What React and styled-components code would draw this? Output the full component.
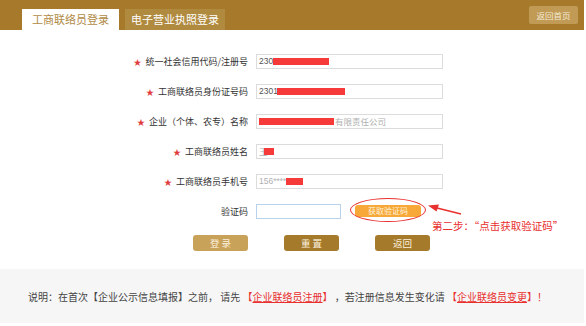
import React from 'react';
import styled, { createGlobalStyle } from 'styled-components';

const GlobalStyle = createGlobalStyle`
  html, body {
    margin: 0;
    padding: 0;
    background: #fff;
  }
  body {
    font-family: "Noto Sans CJK SC", "Noto Sans", sans-serif;
  }
`;

const fields = [
  { label: '统一社会信用代码/注册号', value: '230', dark: true, mask: [16, 56] },
  { label: '工商联络员身份证号码', value: '2301', dark: true, mask: [20, 68] },
  { label: '企业（个体、农专）名称', value: '', mask: [2, 75], suffix: '有限责任公司' },
  { label: '工商联络员姓名', value: '王', mask: [7, 10] },
  { label: '工商联络员手机号', value: '156*****', mask: [29, 17] },
];

const App = () => {
  return (
    <Page>
      <GlobalStyle />
      <Header>
        <Tabs>
          <Tab active>工商联络员登录</Tab>
          <Tab>电子营业执照登录</Tab>
        </Tabs>
        <HomeButton>返回首页</HomeButton>
      </Header>

      <Form>
        {fields.map((f) => (
          <Row key={f.label}>
            <Label>
              <Star>★</Star>
              {f.label}
            </Label>
            <Input>
              <InputText dark={f.dark}>{f.value}</InputText>
              <Mask style={{ left: f.mask[0], width: f.mask[1] }} />
              {f.suffix && (
                <InputText style={{ marginLeft: f.mask[1] + 1 }}>{f.suffix}</InputText>
              )}
            </Input>
          </Row>
        ))}
        <Row>
          <Label>验证码</Label>
          <CodeArea>
            <CodeInput />
            <CodeButtonWrap>
              <CodeButton>获取验证码</CodeButton>
              <Ellipse />
            </CodeButtonWrap>
            <Note>
              <svg width="34" height="12" viewBox="0 0 34 12">
                <path d="M33 10 L9 4" stroke="#e8302f" strokeWidth="1.6" fill="none" />
                <path d="M0 1.5 L11 0.5 L8.5 7.5 Z" fill="#e8302f" />
              </svg>
              <NoteText>第二步：“点击获取验证码”</NoteText>
            </Note>
          </CodeArea>
        </Row>
      </Form>

      <Actions>
        <ActionButton light>登 录</ActionButton>
        <ActionButton>重 置</ActionButton>
        <ActionButton>返回</ActionButton>
      </Actions>

      <Footer>
        说明：在首次【企业公示信息填报】之前， 请先 <Red>【<u>企业联络员注册</u>】</Red> ，若注册信息发生变化请 <Red>【<u>企业联络员变更</u>】！</Red>
      </Footer>
    </Page>
  );
};

export default App;

const Page = styled.div`
  width: 584px;
  height: 326px;
  background: #fff;
`;

const Header = styled.div`
  height: 30px;
  background: #a67a2a;
  display: flex;
  justify-content: space-between;
  align-items: flex-start;
  padding: 0 6px 0 22px;
`;

const Tabs = styled.div`
  display: flex;
  gap: 6px;
  padding-top: 9px;
`;

const Tab = styled.div`
  height: 21px;
  line-height: 21px;
  width: ${(p) => (p.active ? '97px' : '100px')};
  box-sizing: border-box;
  font-size: 11px;
  text-align: center;
  background: ${(p) => (p.active ? '#fff' : '#b08a3e')};
  color: ${(p) => (p.active ? '#b08a45' : '#fff')};
`;

const HomeButton = styled.div`
  margin-top: 6px;
  width: 49px;
  height: 18px;
  line-height: 18px;
  text-align: center;
  font-size: 8.5px;
  color: #f4ead6;
  background: #c19a55;
  border-radius: 2px;
`;

const Form = styled.div`
  padding-top: 16px;
  display: flex;
  flex-direction: column;
`;

const Row = styled.div`
  height: 30px;
  display: grid;
  grid-template-columns: 248px 1fr;
  column-gap: 8px;
  align-items: center;
`;

const Label = styled.div`
  display: flex;
  justify-content: flex-end;
  align-items: center;
  font-size: 9px;
  color: #333;
  white-space: nowrap;
`;

const Star = styled.span`
  color: #e03a3a;
  font-size: 8px;
  margin-right: 4px;
`;

const Input = styled.div`
  position: relative;
  width: 187px;
  height: 15px;
  box-sizing: border-box;
  border: 1px solid #dcdcdc;
  display: flex;
  align-items: center;
  padding-left: 2px;
`;

const InputText = styled.span`
  font-size: 8.5px;
  color: ${(p) => (p.dark ? '#555' : '#b0b0b0')};
  font-family: "Liberation Sans", "Noto Sans CJK SC", sans-serif;
`;

const Mask = styled.div`
  position: absolute;
  top: 3px;
  height: 7px;
  background: #f63a3a;
`;

const CodeArea = styled.div`
  position: relative;
  display: flex;
  align-items: center;
`;

const CodeInput = styled.div`
  width: 85px;
  height: 15px;
  box-sizing: border-box;
  border: 1px solid #b8d2ec;
`;

const CodeButtonWrap = styled.div`
  position: relative;
  margin-left: 14px;
`;

const CodeButton = styled.div`
  width: 66px;
  height: 12px;
  line-height: 12px;
  background: #f7a838;
  border-radius: 3px;
  color: #fff3dc;
  font-size: 8px;
  text-align: center;
`;

const Ellipse = styled.div`
  position: absolute;
  left: -5px;
  top: -7px;
  width: 76px;
  height: 24px;
  box-sizing: border-box;
  border: 1.5px solid #e8302f;
  border-radius: 50%;
`;

const Note = styled.div`
  position: absolute;
  left: 172px;
  top: 0px;
  display: flex;
  flex-direction: column;
  align-items: flex-start;
`;

const NoteText = styled.div`
  margin-top: 4px;
  margin-left: 4px;
  font-size: 10.5px;
  color: #e8302f;
  white-space: nowrap;
  line-height: 12px;
`;

const Actions = styled.div`
  display: flex;
  gap: 36px;
  padding-left: 193px;
  margin-top: 9px;
`;

const ActionButton = styled.div`
  width: 55px;
  height: 16px;
  line-height: 16px;
  border-radius: 3px;
  text-align: center;
  font-size: 9.5px;
  color: #fbf1de;
  background: ${(p) => (p.light ? '#c9a25a' : '#a57a2b')};
`;

const Footer = styled.div`
  margin-top: 18px;
  height: 54px;
  background: #f6f6f6;
  box-sizing: border-box;
  padding-left: 28px;
  display: flex;
  align-items: center;
  font-size: 10px;
  color: #444;
  white-space: pre;
`;

const Red = styled.span`
  color: #e8302f;
  u {
    text-decoration: underline;
  }
`;
